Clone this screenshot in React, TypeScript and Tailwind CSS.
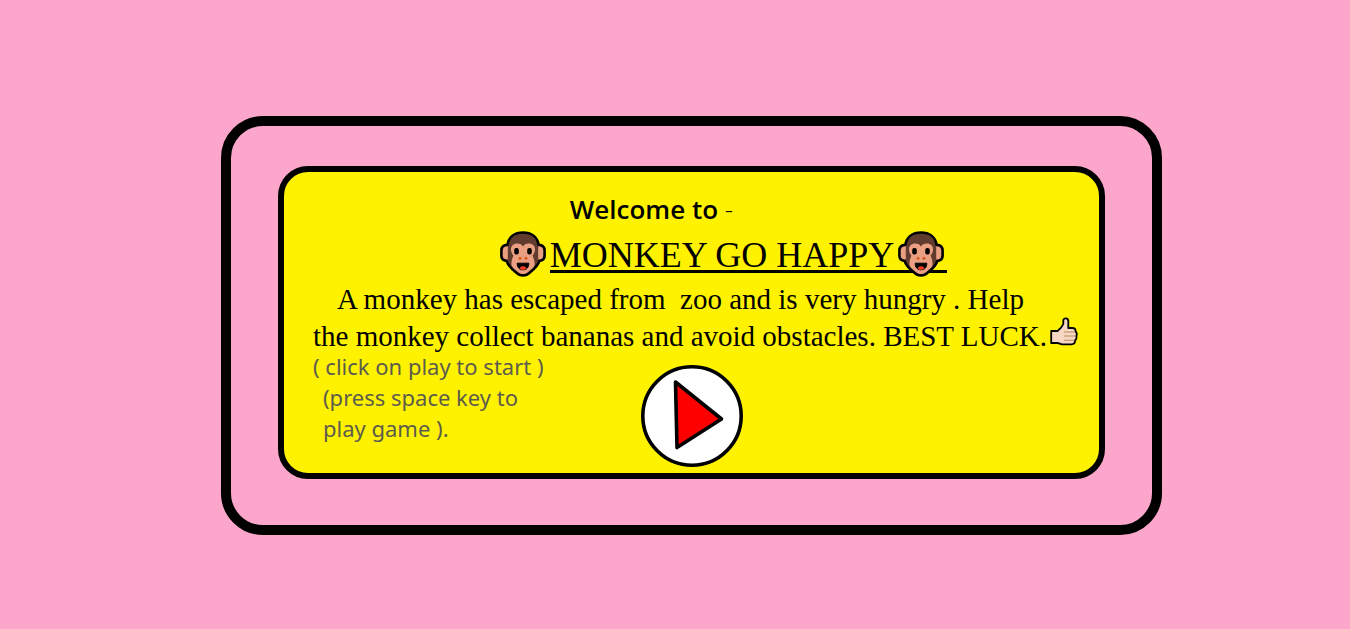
function Monkey() {
  return (
    <svg viewBox="0 0 46 46" className="h-[46px] w-[46px] shrink-0" aria-hidden="true">
      <path
        d="M23 1.5C14.5 1.5 8.6 6 7.4 13.7C3.2 13.9 1.4 16 1.4 19.5V25C1.4 28.2 3.2 29.6 6.6 29.9C7.8 34 11 37.4 15.6 41C18.2 43.4 20.2 44.5 23 44.5C25.8 44.5 27.8 43.4 30.4 41C35 37.4 38.2 34 39.4 29.9C42.8 29.6 44.6 28.2 44.6 25V19.5C44.6 16 42.8 13.9 38.6 13.7C37.4 6 31.5 1.5 23 1.5Z"
        fill="#603c2f"
        stroke="#000"
        strokeWidth="2.6"
        strokeLinejoin="round"
      />
      <path d="M7.8 15.2C4.2 15.4 2.8 17 2.8 19.5V24.8C2.8 27.2 4.2 28.5 7.8 28.5Z" fill="#eb9f82" />
      <path d="M38.2 15.2C41.8 15.4 43.2 17 43.2 19.5V24.8C43.2 27.2 41.8 28.5 38.2 28.5Z" fill="#eb9f82" />
      <path
        d="M17.3 12.6C13.2 12.6 11 15 11 18.6C11 21.2 12 23 13.4 24.4C12.2 27.6 11 31 11.6 34.4C13 37.2 15.4 38.8 17.2 40.4C19.4 42.3 21 43.1 23 43.1C25 43.1 26.6 42.3 28.8 40.4C30.6 38.8 33 37.2 34.4 34.4C35 31 33.8 27.6 32.6 24.4C34 23 35 21.2 35 18.6C35 15 32.8 12.6 28.7 12.6C26 12.6 24 13.8 23 15.8C22 13.8 20 12.6 17.3 12.6Z"
        fill="#eb9f82"
      />
      <rect x="14.2" y="17" width="4.6" height="6.6" rx="2" />
      <rect x="27.2" y="17" width="4.6" height="6.6" rx="2" />
      <circle cx="20" cy="27.3" r="1.5" fill="#d45b1c" />
      <circle cx="26" cy="27.3" r="1.5" fill="#d45b1c" />
      <path d="M17.2 32.2H28.8C28.8 36.2 26.8 38.8 23 38.8S17.2 36.2 17.2 32.2Z" stroke="#000" strokeLinejoin="round" />
      <path d="M19.6 37.2C20.6 35.4 22 35.2 23 35.2S25.4 35.4 26.4 37.2C25 39.2 21 39.2 19.6 37.2Z" fill="#f43a22" />
    </svg>
  );
}

function ThumbsUp() {
  return (
    <svg viewBox="0 0 28 30" className="h-[30px] w-7" aria-hidden="true">
      <path
        d="M1.2 14H7.5C10 12 12.4 9.5 13.3 7V3.5C13.3 .6 18.3 .5 18.3 4V11H22C25 11 25.8 12.5 25.4 14.2C27 16 26.9 18 26.3 19C26.8 21 26.2 22.5 25.2 23.3C25.2 26 24 27.3 21.5 27.3H12.5C10 27.3 9.5 26 7.5 26H1.2Z"
        fill="#f7d7c4"
        stroke="#000"
        strokeWidth="1.8"
        strokeLinejoin="round"
      />
      <path d="M14 15H24.6M14 19H25.3M14 23.2H24.3" fill="none" stroke="#b98f60" strokeWidth="1.1" />
    </svg>
  );
}

function PlayIcon() {
  return (
    <svg viewBox="0 0 102 102" className="h-[102px] w-[102px]" aria-hidden="true">
      <circle cx="51" cy="51" r="49.2" fill="#fff" stroke="#000" strokeWidth="3.6" />
      <path d="M34.5 17L80.5 54L36 82.5Z" fill="#f00" stroke="#000" strokeWidth="3.6" strokeLinejoin="round" />
    </svg>
  );
}

export default function App() {
  return (
    <div className="flex min-h-screen items-center justify-center bg-[#fda6cb] pt-[22px] pl-[33px] text-black">
      <main className="w-full max-w-[941px] rounded-[42px] border-10 border-black px-[47px] pt-10 pb-[46px]">
        <section className="rounded-[30px] border-6 border-black bg-[#fff200] px-[29px] pt-[19px] pb-1.5 font-['Liberation_Serif',serif]">
          <p className="pr-20 text-center font-['Open_Sans',sans-serif] text-[26px] leading-9 font-semibold">
            Welcome to <span className="font-light">-</span>
          </p>
          <h1 className="flex h-[54px] items-start justify-center gap-1 pt-1 pl-16 text-[36px] leading-[48px]">
            <Monkey />
            <span className="flex h-[42px] items-start gap-1 border-b-3 border-black pr-[3px]">
              MONKEY GO HAPPY
              <Monkey />
            </span>
          </h1>
          <div className="flex items-end gap-[3px] text-[29px] leading-[37px] whitespace-pre">
            <p>
              <span className="block pl-6">A monkey has escaped from  zoo and is very hungry . Help</span>
              <span className="block">the monkey collect bananas and avoid obstacles. BEST LUCK.</span>
            </p>
            <span className="pb-2">
              <ThumbsUp />
            </span>
          </div>
          <div className="-mt-1 grid grid-cols-[1fr_auto_1fr]">
            <div className="font-['Noto_Sans',sans-serif] text-[22px] leading-[31px] text-[#5c5c4c]">
              <p>( click on play to start )</p>
              <p className="pl-2.5">
                (press space key to
                <br />
                play game ).
              </p>
            </div>
            <button type="button" aria-label="Play" className="mt-3.5 cursor-pointer rounded-full">
              <PlayIcon />
            </button>
          </div>
        </section>
      </main>
    </div>
  );
}
